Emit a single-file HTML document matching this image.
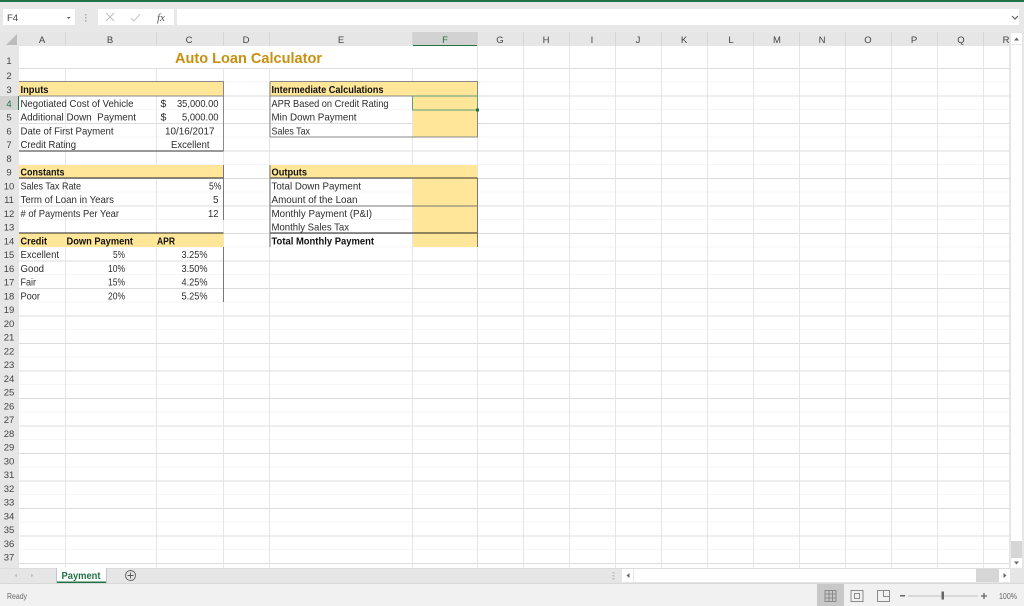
<!DOCTYPE html>
<html><head><meta charset="utf-8"><style>
html,body{margin:0;padding:0;background:#fff;width:1024px;height:606px;overflow:hidden}
svg{display:block;font-family:"Liberation Sans",sans-serif}
.t{font-size:10.5px;fill:#2c2c2c}
.b{font-size:10.5px;font-weight:bold;fill:#111}
.h{font-size:9.5px;fill:#444;text-anchor:middle}
.r{font-size:9.5px;fill:#444;text-anchor:middle}
</style></head><body>
<svg width="1024" height="606" viewBox="0 0 1024 606" xmlns="http://www.w3.org/2000/svg">
<rect width="1024" height="606" fill="#fff"/>
<!-- top chrome -->
<rect width="1024" height="32" fill="#e8e8e8"/>
<rect width="1024" height="2" fill="#217346"/>
<rect x="3" y="9" width="72" height="16" fill="#fff"/>
<text x="7" y="21" font-size="9.5" fill="#444">F4</text>
<path d="M67 17h3.500l-1.750 2z" fill="#555"/>
<g fill="#aaa"><rect x="85" y="14" width="1.500" height="1.500"/><rect x="85" y="17" width="1.500" height="1.500"/><rect x="85" y="20" width="1.500" height="1.500"/></g>
<rect x="98" y="9" width="76" height="16" fill="#fff"/>
<path d="M106 13l8 8M114 13l-8 8" stroke="#bdbdbd" stroke-width="1" fill="none"/>
<path d="M131 18l3 3 6-7" stroke="#c4c4c4" stroke-width="1" fill="none"/>
<text x="157" y="21" font-size="11" font-style="italic" font-family="Liberation Serif" fill="#555">fx</text>
<rect x="177" y="9" width="842" height="16" fill="#fff"/>
<path d="M1012 16l3 3 3-3" stroke="#666" stroke-width="1.200" fill="none"/>
<!-- column headers -->
<rect y="32" width="1010" height="14" fill="#e6e6e6"/>
<rect x="413" y="32" width="65" height="14" fill="#d2d2d2"/>
<rect x="413" y="45" width="65" height="1" fill="#217346"/>
<path d="M17 34v11h-11z" fill="#bcbcbc"/>
<rect x="0" y="46" width="19" height="522" fill="#e6e6e6"/>
<rect x="0" y="96" width="19" height="14" fill="#d2d2d2"/>
<g stroke="#d6d6d6" stroke-width="1" fill="none">
<path d="M65.500 32v14M156.500 32v14M223.500 32v14M269.500 32v14M412.500 32v14M477.500 32v14M523.500 32v14M569.500 32v14M615.500 32v14M661.500 32v14M707.500 32v14M753.500 32v14M799.500 32v14M845.500 32v14M891.500 32v14M937.500 32v14M983.500 32v14"/>
</g>
<g>
<text class="h" x="42" y="43">A</text><text class="h" x="110" y="43">B</text><text class="h" x="189" y="43">C</text><text class="h" x="246" y="43">D</text><text class="h" x="341" y="43">E</text><text class="h" x="445" y="43" style="fill:#217346">F</text><text class="h" x="500" y="43">G</text><text class="h" x="546" y="43">H</text><text class="h" x="592" y="43">I</text><text class="h" x="638" y="43">J</text><text class="h" x="684" y="43">K</text><text class="h" x="731" y="43">L</text><text class="h" x="777" y="43">M</text><text class="h" x="822" y="43">N</text><text class="h" x="868" y="43">O</text><text class="h" x="914" y="43">P</text><text class="h" x="961" y="43">Q</text><text class="h" x="1006" y="43">R</text>
</g>
<!-- gridlines: faint rows -->
<g stroke="#f6f6f6" stroke-width="1" fill="none">
<path d="M19 82H1010M19 109.500H1010M19 137H1010M19 164.500H1010M19 192H1010M19 219.500H1010M19 247H1010M19 274.500H1010M19 302H1010M19 329.500H1010M19 357H1010M19 384.500H1010M19 412H1010M19 439.500H1010M19 467H1010M19 494.500H1010M19 522H1010M19 549.500H1010"/>
</g>
<!-- gridlines: strong rows -->
<g stroke="#dcdcdc" stroke-width="1" fill="none">
<path d="M19 68.500H1010M19 96H1010M19 123.500H1010M19 151H1010M19 178.500H1010M19 206H1010M19 233.500H1010M19 261H1010M19 288.500H1010M19 316H1010M19 343.500H1010M19 371H1010M19 398.500H1010M19 426H1010M19 453.500H1010M19 481H1010M19 508.500H1010M19 536H1010M19 563.500H1010M0 568.500H1010"/>
</g>
<!-- gridlines: columns -->
<g stroke="#e6e6e6" stroke-width="1" fill="none">
<path d="M65.500 68v500M156.500 68v500M223.500 68v500M269.500 68v500M412.500 68v500M477.500 46v522M523.500 46v522M569.500 46v522M615.500 46v522M661.500 46v522M707.500 46v522M753.500 46v522M799.500 46v522M845.500 46v522M891.500 46v522M937.500 46v522M983.500 46v522M1009.500 46v522"/>
</g>
<!-- yellow fills -->
<g fill="#ffe699">
<rect x="19" y="82" width="204.500" height="14"/>
<rect x="19" y="165" width="204.500" height="13"/>
<rect x="19" y="233" width="204.500" height="14"/>
<rect x="270" y="82" width="207.500" height="14"/>
<rect x="413" y="96" width="64.500" height="41"/>
<rect x="270" y="165" width="207.500" height="13"/>
<rect x="413" y="178" width="64.500" height="69"/>
</g>
<rect x="18" y="96" width="1" height="14" fill="#217346"/>
<!-- row numbers -->
<g>
<text class="r" x="9" y="64">1</text><text class="r" x="9" y="79">2</text><text class="r" x="9" y="93">3</text><text class="r" x="9" y="107" style="fill:#217346">4</text><text class="r" x="9" y="120.500">5</text><text class="r" x="9" y="134.500">6</text><text class="r" x="9" y="148">7</text><text class="r" x="9" y="162">8</text><text class="r" x="9" y="175.500">9</text><text class="r" x="9" y="189.500">10</text><text class="r" x="9" y="203">11</text><text class="r" x="9" y="217">12</text><text class="r" x="9" y="230.500">13</text><text class="r" x="9" y="244.500">14</text><text class="r" x="9" y="258">15</text><text class="r" x="9" y="272">16</text><text class="r" x="9" y="285.500">17</text><text class="r" x="9" y="299.500">18</text><text class="r" x="9" y="313">19</text><text class="r" x="9" y="327">20</text><text class="r" x="9" y="340.500">21</text><text class="r" x="9" y="354.500">22</text><text class="r" x="9" y="368">23</text><text class="r" x="9" y="382">24</text><text class="r" x="9" y="395.500">25</text><text class="r" x="9" y="409.500">26</text><text class="r" x="9" y="423">27</text><text class="r" x="9" y="437">28</text><text class="r" x="9" y="450.500">29</text><text class="r" x="9" y="464.500">30</text><text class="r" x="9" y="478">31</text><text class="r" x="9" y="492">32</text><text class="r" x="9" y="505.500">33</text><text class="r" x="9" y="519.500">34</text><text class="r" x="9" y="533">35</text><text class="r" x="9" y="547">36</text><text class="r" x="9" y="560.500">37</text>
</g>
<!-- borders -->
<g fill="none" stroke-width="1">
<path d="M19 81.500H223.500V151M19 96H223.500" stroke="#8a8a8a"/>
<path d="M19 151H223.500" stroke="#777" stroke-width="1.500"/>
<path d="M19 178H223.500" stroke="#222"/>
<path d="M223.500 165V220M223.500 247V302" stroke="#777"/>
<path d="M19 233H223.500" stroke="#222"/>
<path d="M270 81.500H477.500V137M270 137H477.500M270 96H477.500" stroke="#888"/>
<path d="M270 82V137" stroke="#888"/>
<path d="M270 178H477.500" stroke="#333"/>
<path d="M270 206H477.500" stroke="#777"/>
<path d="M270 233H477.500" stroke="#222"/>
<path d="M270 165V247M477.500 178V247" stroke="#777"/>
</g>
<!-- selection -->
<rect x="412.500" y="96" width="65" height="14" fill="none" stroke="#5c9c7c" stroke-width="1"/>
<rect x="476" y="108.500" width="3" height="3" fill="#217346"/>
<!-- title -->
<text x="175" y="63" font-size="15" font-weight="bold" fill="#c8900f" textLength="147" lengthAdjust="spacingAndGlyphs">Auto Loan Calculator</text>
<!-- inputs -->
<text class="b" x="20.500" y="93" textLength="28" lengthAdjust="spacingAndGlyphs">Inputs</text>
<text class="t" x="20.500" y="107" textLength="113" lengthAdjust="spacingAndGlyphs">Negotiated Cost of Vehicle</text>
<text class="t" x="20.500" y="120.500" textLength="115.500" lengthAdjust="spacingAndGlyphs" xml:space="preserve">Additional Down  Payment</text>
<text class="t" x="20.500" y="134.500" textLength="93" lengthAdjust="spacingAndGlyphs">Date of First Payment</text>
<text class="t" x="20.500" y="148" textLength="55.500" lengthAdjust="spacingAndGlyphs">Credit Rating</text>
<text class="t" x="160.500" y="107">$</text><text class="t" x="177" y="107" textLength="41.500" lengthAdjust="spacingAndGlyphs">35,000.00</text>
<text class="t" x="160.500" y="120.500">$</text><text class="t" x="182" y="120.500" textLength="36.500" lengthAdjust="spacingAndGlyphs">5,000.00</text>
<text class="t" x="165" y="134.500" textLength="49.500" lengthAdjust="spacingAndGlyphs">10/16/2017</text>
<text class="t" x="171" y="148" textLength="38.500" lengthAdjust="spacingAndGlyphs">Excellent</text>
<!-- constants -->
<text class="b" x="20.500" y="175.500" textLength="44" lengthAdjust="spacingAndGlyphs">Constants</text>
<text class="t" x="20.500" y="189.500" textLength="60.500" lengthAdjust="spacingAndGlyphs">Sales Tax Rate</text>
<text class="t" x="20.500" y="203" textLength="93.500" lengthAdjust="spacingAndGlyphs">Term of Loan in Years</text>
<text class="t" x="20.500" y="217" textLength="98.500" lengthAdjust="spacingAndGlyphs"># of Payments Per Year</text>
<text class="t" x="209" y="189.500" textLength="12.500" lengthAdjust="spacingAndGlyphs">5%</text>
<text class="t" x="213" y="203" textLength="5.500" lengthAdjust="spacingAndGlyphs">5</text>
<text class="t" x="208" y="217" textLength="10.500" lengthAdjust="spacingAndGlyphs">12</text>
<!-- credit -->
<text class="b" x="20.500" y="244.500" textLength="26.500" lengthAdjust="spacingAndGlyphs">Credit</text>
<text class="b" x="66.500" y="244.500" textLength="66.500" lengthAdjust="spacingAndGlyphs">Down Payment</text>
<text class="b" x="157" y="244.500" textLength="18" lengthAdjust="spacingAndGlyphs">APR</text>
<text class="t" x="20.500" y="258" textLength="38.500" lengthAdjust="spacingAndGlyphs">Excellent</text>
<text class="t" x="20.500" y="272" textLength="23.500" lengthAdjust="spacingAndGlyphs">Good</text>
<text class="t" x="20.500" y="285.500" textLength="15.500" lengthAdjust="spacingAndGlyphs">Fair</text>
<text class="t" x="20.500" y="299.500" textLength="19.500" lengthAdjust="spacingAndGlyphs">Poor</text>
<text class="t" x="113" y="258" textLength="12" lengthAdjust="spacingAndGlyphs">5%</text>
<text class="t" x="108" y="272" textLength="17" lengthAdjust="spacingAndGlyphs">10%</text>
<text class="t" x="108" y="285.500" textLength="17" lengthAdjust="spacingAndGlyphs">15%</text>
<text class="t" x="108" y="299.500" textLength="17" lengthAdjust="spacingAndGlyphs">20%</text>
<text class="t" x="181.500" y="258" textLength="26" lengthAdjust="spacingAndGlyphs">3.25%</text>
<text class="t" x="181.500" y="272" textLength="26" lengthAdjust="spacingAndGlyphs">3.50%</text>
<text class="t" x="181.500" y="285.500" textLength="26" lengthAdjust="spacingAndGlyphs">4.25%</text>
<text class="t" x="181.500" y="299.500" textLength="26" lengthAdjust="spacingAndGlyphs">5.25%</text>
<!-- intermediate -->
<text class="b" x="271.500" y="93" textLength="112" lengthAdjust="spacingAndGlyphs">Intermediate Calculations</text>
<text class="t" x="271.500" y="107" textLength="117" lengthAdjust="spacingAndGlyphs">APR Based on Credit Rating</text>
<text class="t" x="271.500" y="120.500" textLength="85" lengthAdjust="spacingAndGlyphs">Min Down Payment</text>
<text class="t" x="271.500" y="134.500" textLength="38.500" lengthAdjust="spacingAndGlyphs">Sales Tax</text>
<!-- outputs -->
<text class="b" x="271.500" y="175.500" textLength="35.500" lengthAdjust="spacingAndGlyphs">Outputs</text>
<text class="t" x="271.500" y="189.500" textLength="89.500" lengthAdjust="spacingAndGlyphs">Total Down Payment</text>
<text class="t" x="271.500" y="203" textLength="86" lengthAdjust="spacingAndGlyphs">Amount of the Loan</text>
<text class="t" x="271.500" y="217" textLength="100.500" lengthAdjust="spacingAndGlyphs">Monthly Payment (P&amp;I)</text>
<text class="t" x="271.500" y="230.500" textLength="77.500" lengthAdjust="spacingAndGlyphs">Monthly Sales Tax</text>
<text class="b" x="271.500" y="244.500" textLength="102.500" lengthAdjust="spacingAndGlyphs">Total Monthly Payment</text>
<!-- vertical scrollbar -->
<rect x="1010" y="32" width="14" height="537" fill="#e6e6e6"/>
<rect x="1011" y="33" width="11" height="11" fill="#fff"/>
<path d="M1014 40.500h5l-2.500-3z" fill="#666"/>
<rect x="1011" y="45" width="11" height="496" fill="#fff"/>
<rect x="1011" y="541" width="11" height="17" fill="#d6d6d6"/>
<rect x="1011" y="558" width="11" height="10" fill="#fff"/>
<path d="M1014 561.500h5l-2.500 3z" fill="#666"/>
<!-- sheet bar -->
<rect y="569" width="1024" height="14" fill="#e6e6e6"/>
<path d="M17 573.500v4l-2.500-2z" fill="#c0c0c0"/><path d="M31 573.500v4l2.500-2z" fill="#c0c0c0"/>
<rect x="57" y="568" width="49.500" height="15" fill="#fff"/>
<rect x="57" y="581.500" width="49.500" height="1.500" fill="#217346"/>
<path d="M56.500 568v15M106.500 568v15" stroke="#c6c6c6" fill="none"/>
<text x="61.500" y="579" font-size="10" font-weight="bold" fill="#217346" textLength="39" lengthAdjust="spacingAndGlyphs">Payment</text>
<circle cx="130.500" cy="575.500" r="5" fill="none" stroke="#666" stroke-width=".9"/>
<path d="M127.500 575.500h6M130.500 572.500v6" stroke="#555" stroke-width=".9" fill="none"/>
<g fill="#bbb"><rect x="612.500" y="572" width="2" height="1.500"/><rect x="612.500" y="575" width="2" height="1.500"/><rect x="612.500" y="578" width="2" height="1.500"/></g>
<rect x="622" y="569" width="11" height="13" fill="#fff"/>
<path d="M629.500 573v5l-3-2.500z" fill="#666"/>
<rect x="634" y="569" width="342" height="13" fill="#fff"/>
<rect x="976" y="569" width="23" height="13" fill="#d6d6d6"/>
<rect x="999" y="569" width="11" height="13" fill="#fff"/>
<path d="M1003.500 573v5l3-2.500z" fill="#666"/>
<!-- status bar -->
<rect y="583" width="1024" height="23" fill="#f1f1f1"/>
<rect y="583" width="1024" height="1" fill="#d8d8d8"/>
<text x="7" y="599" font-size="8.500" fill="#666" textLength="20" lengthAdjust="spacingAndGlyphs">Ready</text>
<rect x="817" y="584" width="27" height="22" fill="#c8c8c8"/>
<g fill="none" stroke="#8a8a8a" stroke-width="1">
<path d="M825 590.500h11v11h-11zM825 594h11M825 598h11M829 590.500v11M832.500 590.500v11"/>
<rect x="851" y="590.500" width="12" height="11"/><rect x="854.500" y="593.500" width="5" height="5"/>
<rect x="877.500" y="590.500" width="12" height="11"/><path d="M883.500 590.500v6h6"/>
</g>
<rect x="900" y="595" width="5" height="1.500" fill="#666"/>
<rect x="908" y="595.500" width="70" height="1" fill="#c0c0c0"/>
<rect x="941.500" y="591.500" width="2.500" height="8" fill="#666"/>
<path d="M981 596h6M984 593v6" stroke="#666" stroke-width="1.300" fill="none"/>
<text x="999" y="599" font-size="8" fill="#666" textLength="18" lengthAdjust="spacingAndGlyphs">100%</text>
</svg>
</body></html>
